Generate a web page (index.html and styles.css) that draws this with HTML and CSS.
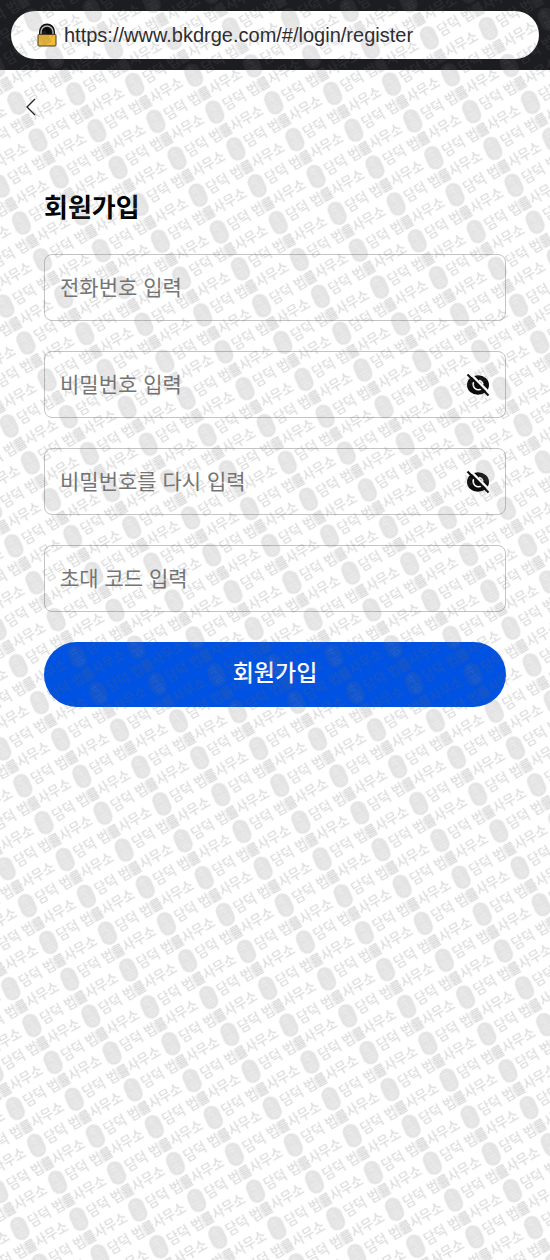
FILE: index.html
```html
<!DOCTYPE html>
<html lang="ko">
<head>
    <meta charset="UTF-8">
    <meta name="viewport" content="width=device-width, initial-scale=1.0">
    <title>회원가입</title>
    <link rel="stylesheet" href="styles.css">
</head>
<body>

    <!-- Address Bar -->
    <header class="browser-bar">
        <div class="address">
            <svg class="lock-icon" viewBox="0 0 20 24" aria-hidden="true">
                <path d="M2 13V8.500a8 8 0 0 1 16 0V13z" fill="#0c0c0c"/>
                <path d="M4 12V9a6 6 0 0 1 12 0v3" fill="none" stroke="#b5b5b5" stroke-width="1.500"/>
                <rect x="1" y="11.500" width="18" height="11.500" rx="1" fill="#f2bb35" stroke="#4a3a18" stroke-width="1"/>
            </svg>
            <input type="text" class="url" aria-label="주소" value="https://www.bkdrge.com/#/login/register" readonly>
        </div>
    </header>

    <main>
        <a href="#/login" class="back-link" aria-label="뒤로">
            <svg viewBox="0 0 12 18" aria-hidden="true">
                <path d="M10 1L2 9l8 8" fill="none" stroke="#222" stroke-width="1.3"/>
            </svg>
        </a>

        <!-- Register Section -->
        <section class="register">
            <h1>회원가입</h1>
            <form id="registerForm">
                <div class="field">
                    <input type="tel" aria-label="전화번호" placeholder="전화번호 입력">
                </div>
                <div class="field">
                    <input type="password" aria-label="비밀번호" placeholder="비밀번호 입력">
                    <button type="button" class="eye-button" aria-label="비밀번호 표시">
                        <svg viewBox="0 0 24 24" aria-hidden="true">
                            <ellipse cx="12" cy="12" rx="11" ry="9.8" fill="#0c0c0c"/>
                            <path d="M8.500 8a5 5 0 1 0 8 7M13 7.500a5 5 0 0 1 4 4" fill="none" stroke="#fff" stroke-width="1.6"/>
                            <path d="M3.500 0l21 21" stroke="#fff" stroke-width="2.4"/>
                            <path d="M1.500 1.500l21 21" stroke="#0c0c0c" stroke-width="2.2"/>
                        </svg>
                    </button>
                </div>
                <div class="field">
                    <input type="password" aria-label="비밀번호 확인" placeholder="비밀번호를 다시 입력">
                    <button type="button" class="eye-button" aria-label="비밀번호 표시">
                        <svg viewBox="0 0 24 24" aria-hidden="true">
                            <ellipse cx="12" cy="12" rx="11" ry="9.8" fill="#0c0c0c"/>
                            <path d="M8.500 8a5 5 0 1 0 8 7M13 7.500a5 5 0 0 1 4 4" fill="none" stroke="#fff" stroke-width="1.6"/>
                            <path d="M3.500 0l21 21" stroke="#fff" stroke-width="2.4"/>
                            <path d="M1.500 1.500l21 21" stroke="#0c0c0c" stroke-width="2.2"/>
                        </svg>
                    </button>
                </div>
                <div class="field">
                    <input type="text" aria-label="초대 코드" placeholder="초대 코드 입력">
                </div>
                <button type="submit" class="submit-button">회원가입</button>
            </form>
        </section>
    </main>

    <!-- Watermark -->
    <svg class="watermark" aria-hidden="true">
        <defs>
            <g id="mark">
                <rect x="-8" y="-12" width="16" height="24" rx="8" fill-opacity="0.75" transform="rotate(6)"/>
                <path d="M-4-7h7M-4-4h5v4M-5 2h9M-3 5h6v3h-6zM0-10v4" fill="none" stroke="#fff" stroke-opacity="0.35"/>
                <text x="11" y="4">담덕 법률사무소</text>
                <rect x="50" y="-6" width="11" height="12" fill-opacity="0.45"/>
            </g>
            <pattern id="marks" width="111.5" height="42.5" patternUnits="userSpaceOnUse" patternTransform="translate(368.4 399.8) rotate(-29.85)">
                <use href="#mark" x="10" y="14"/>
                <use href="#mark" x="65.75" y="35.25"/>
                <use href="#mark" x="-45.75" y="35.25"/>
                <use href="#mark" x="65.75" y="-7.25"/>
                <use href="#mark" x="-45.75" y="-7.25"/>
            </pattern>
        </defs>
        <rect width="100%" height="100%" fill="url(#marks)"/>
    </svg>

</body>
</html>
```
FILE: styles.css
```css
/* Basic Reset */
* {
    margin: 0;
    padding: 0;
    box-sizing: border-box;
}

body {
    position: relative;
    min-height: 100vh;
    font-family: 'Noto Sans CJK KR', sans-serif;
    color: #000;
    background: #fff;
}

/* Address Bar */
.browser-bar {
    padding: 11px;
    background: #1c1d21;
}

.address {
    display: flex;
    align-items: center;
    gap: 7px;
    height: 48px;
    padding: 0 26px;
    border-radius: 24px;
    background: #fff;
}

.lock-icon {
    flex: none;
    width: 20px;
    height: 24px;
}

.url {
    flex: 1;
    min-width: 0;
    border: none;
    outline: none;
    background: none;
    font-family: 'Liberation Sans', Arial, sans-serif;
    font-size: 20px;
    color: #2b2b2e;
}

/* Back Link */
.back-link {
    display: block;
    width: 12px;
    height: 18px;
    margin: 28px 25px 0;
}

.back-link svg,
.eye-button svg {
    display: block;
    width: 100%;
    height: 100%;
}

/* Register Section */
.register {
    padding: 71px 44px 40px;
}

.register h1 {
    margin-bottom: 29px;
    font-size: 26px;
    line-height: 38px;
    font-weight: 700;
}

#registerForm {
    display: flex;
    flex-direction: column;
    gap: 30px;
}

.field {
    display: flex;
    align-items: center;
    height: 67px;
    padding: 0 15px;
    border: 1px solid #c4c4c4;
    border-radius: 8px;
}

.field input {
    flex: 1;
    min-width: 0;
    height: 100%;
    padding-bottom: 4px;
    border: none;
    outline: none;
    background: none;
    font-family: inherit;
    font-size: 21px;
    color: #000;
}

.field input::placeholder {
    color: #757575;
}

.eye-button {
    flex: none;
    width: 24px;
    height: 24px;
    border: none;
    background: none;
    cursor: pointer;
}

.submit-button {
    height: 65px;
    padding-bottom: 8px;
    border: none;
    border-radius: 33px;
    background: #0052e2;
    color: #fff;
    font-family: inherit;
    font-size: 23px;
    font-weight: 500;
    cursor: pointer;
}

/* Watermark */
.watermark {
    position: absolute;
    top: 0;
    left: 0;
    width: 100%;
    height: 100%;
    pointer-events: none;
    fill: #666;
    opacity: 0.23;
}

.watermark text {
    font-size: 13px;
    font-weight: 500;
}
```
